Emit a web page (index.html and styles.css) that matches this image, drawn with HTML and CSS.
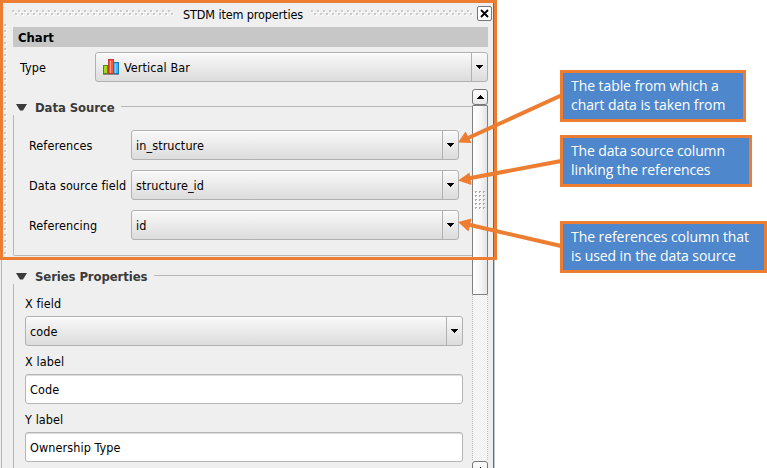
FILE: index.html
```html
<!DOCTYPE html>
<html lang="en">
<head>
<meta charset="utf-8">
<title>STDM item properties</title>
<link rel="stylesheet" href="styles.css">
</head>
<body>
<main class="panel">
  <div class="grip"><svg width="4" height="237"><defs><pattern id="side" width="4" height="6" patternUnits="userSpaceOnUse"><rect width="2" height="2" fill="#c7c7c7"/><path d="M2 1H3V3H1V2H2Z" fill="#fff"/></pattern></defs><rect width="4" height="237" fill="url(#side)"/></svg></div>
  <header class="titlebar">
    <svg class="dots" width="162" height="6"><defs><pattern id="dots" width="6" height="6" patternUnits="userSpaceOnUse"><rect width="2" height="2" fill="#cacaca"/><path d="M2 1H3V3H1V2H2ZM5 4H6V6H4V5H5Z" fill="#fff"/><rect x="3" y="3" width="2" height="2" fill="#cacaca"/></pattern></defs><rect width="162" height="6" fill="url(#dots)"/></svg>
    <h1 class="window-title"><span>STDM item properties</span></h1>
    <svg class="dots" width="162" height="6"><rect width="162" height="6" fill="url(#dots)"/></svg>
    <button class="close" aria-label="Close"><svg width="9" height="9"><path d="M1 1L8 8M8 1L1 8" stroke="#000" stroke-width="1.8"/></svg></button>
  </header>
  <h2 class="section">Chart</h2>
  <div class="type-row">
    <label>Type</label>
    <div class="combo">
      <svg class="chart-icon" width="17" height="17"><path d="M0 15.500H16" stroke="#888" stroke-width="1"/><rect x=".5" y="6.5" width="4" height="8" fill="#a4dc13" stroke="#4e8b08"/><rect x="10.5" y="3.5" width="5" height="11" fill="#48b5f4" stroke="#1479b8"/><rect x="5.5" y=".5" width="5" height="14" fill="#f8583f" stroke="#c8392a"/><path d="M7.500 2V14" stroke="#ff9a80"/><path d="M12.500 5V14" stroke="#8ad2fb"/></svg>
      <span class="value">Vertical Bar</span>
      <span class="drop"><svg width="7" height="4"><path d="M0 0H7V1H6V2H5V3H4V4H3V3H2V2H1V1H0Z"/></svg></span>
    </div>
  </div>
  <div class="body">
    <div class="scroll-content">
      <section class="group source">
        <h3><svg width="11" height="7"><path d="M0 0H11L7 6.5H4Z" fill="#3a3a3a"/></svg><span>Data Source</span></h3>
        <div class="group-box">
          <div class="row"><label>References</label><div class="combo"><span class="value">in_structure</span><span class="drop"><svg width="7" height="4"><path d="M0 0H7V1H6V2H5V3H4V4H3V3H2V2H1V1H0Z"/></svg></span></div></div>
          <div class="row"><label>Data source field</label><div class="combo"><span class="value">structure_id</span><span class="drop"><svg width="7" height="4"><path d="M0 0H7V1H6V2H5V3H4V4H3V3H2V2H1V1H0Z"/></svg></span></div></div>
          <div class="row"><label>Referencing</label><div class="combo"><span class="value">id</span><span class="drop"><svg width="7" height="4"><path d="M0 0H7V1H6V2H5V3H4V4H3V3H2V2H1V1H0Z"/></svg></span></div></div>
        </div>
      </section>
      <section class="group series">
        <h3><svg width="11" height="7"><path d="M0 0H11L7 6.5H4Z" fill="#3a3a3a"/></svg><span>Series Properties</span></h3>
        <div class="group-box">
          <label>X field</label>
          <div class="combo"><span class="value">code</span><span class="drop"><svg width="7" height="4"><path d="M0 0H7V1H6V2H5V3H4V4H3V3H2V2H1V1H0Z"/></svg></span></div>
          <label>X label</label>
          <div class="field">Code</div>
          <label>Y label</label>
          <div class="field">Ownership Type</div>
        </div>
      </section>
    </div>
    <div class="scrollbar">
      <div class="scroll-button"><svg width="7" height="4"><path d="M3 0H4V1H5V2H6V3H7V4H0V3H1V2H2V1H3Z"/></svg></div>
      <div class="thumb"><svg width="11" height="19"><defs><pattern id="thumb-grip" width="4" height="4" patternUnits="userSpaceOnUse"><path d="M0 0H2V1H1V2H0Z" fill="#aaa"/><rect x="1" y="1" width="1" height="1" fill="#fff"/></pattern></defs><rect width="11" height="19" fill="url(#thumb-grip)"/></svg></div>
      <div class="track"><svg width="16" height="166"><defs><pattern id="check" width="2" height="2" patternUnits="userSpaceOnUse"><rect width="2" height="2" fill="#efefef"/><path d="M0 0H1V1H0ZM1 1H2V2H1Z" fill="#fafafa"/></pattern></defs><rect width="16" height="166" fill="url(#check)"/><path d="M.5 0V166M15.5 0V166" stroke="#bbb" stroke-dasharray="1 1"/></svg></div>
      <div class="scroll-button"><svg width="7" height="4"><path d="M3 0H4V1H5V2H6V3H7V4H0V3H1V2H2V1H3Z"/></svg></div>
    </div>
  </div>
</main>
<svg class="annotations" width="767" height="468">
  <path d="M1.5 1.500H495.500V258.500H1.500Z" fill="none" stroke="#ed7d31" stroke-width="3"/>
  <g stroke="#ed7d31" stroke-width="4"><path d="M561 95.500L467 138.500M561 161L468 178.500M561 246L468 224.500"/></g>
  <g fill="#ed7d31"><path d="M458 142.500L465.500 131.500L471.500 143Z"/><path d="M458 180.500L469.500 172.500L471.500 185Z"/><path d="M458 222L471.500 218.500L468.500 231.500Z"/></g>
</svg>
<aside class="callout table-note"><span>The table from which a</span><br><span>chart data is taken from</span></aside>
<aside class="callout column-note"><span>The data source column</span><br><span>linking the references</span></aside>
<aside class="callout reference-note"><span>The references column that</span><br><span>is used in the data source</span></aside>
</body>
</html>
```
FILE: styles.css
```css
* { box-sizing: border-box; }
body { margin: 0; width: 767px; height: 468px; overflow: hidden; position: relative; background: #fff; color: #000; font: 12.5px/16px "DejaVu Sans Condensed", "DejaVu Sans", sans-serif; font-stretch: condensed; letter-spacing: .1px; }
svg { display: block; flex: none; }
h1, h2, h3 { margin: 0; font-size: inherit; }
.panel { width: 495px; height: 468px; padding: 0 5px 0 13px; background: #efefef; border-right: 1px solid #c1c8ce; box-shadow: inset -1px 0 #626b76, inset 1px 0 #efefef, inset 2px 0 #b5b5b5; display: flex; flex-direction: column; }
.grip { position: absolute; left: 4px; top: 24px; }
.titlebar { height: 27px; flex: none; display: flex; align-items: flex-start; margin-left: -1px; padding-top: 6px; }
.dots { margin-top: 4px; }
.window-title { width: 137px; padding: 1px 0 0 1px; text-align: center; font-weight: normal; letter-spacing: -.12px; white-space: nowrap; }
.close { width: 15px; height: 15px; margin-left: auto; margin-right: -3px; padding: 0; display: grid; place-items: center; border: 1px solid #777; border-radius: 2px; background: #fff; }
.section { width: 475px; height: 20px; flex: none; padding: 3px 5px 1px; background: #c7c7c7; font-size: 13px; font-weight: bold; letter-spacing: -.05px; }
.type-row { width: 475px; height: 42px; flex: none; padding: 5px 0 7px; display: flex; align-items: center; }
.type-row label { width: 82px; padding: 2px 0 0 7px; }
.combo { height: 30px; flex: 1; display: flex; align-items: center; border: 1px solid #b1b1b1; border-radius: 3px; background: linear-gradient(#f9f9f9, #dcdcdc); box-shadow: inset 0 1px #fff; }
.value { flex: 1; padding: 2px 0 0 4px; }
.chart-icon { margin-left: 7px; }
.drop { width: 16px; align-self: stretch; display: grid; place-items: center; border-left: 1px solid #b1b1b1; }
.body { width: 475px; flex: 1; min-height: 0; display: flex; overflow: hidden; }
.scroll-content { width: 459px; height: 379px; overflow: hidden; }
.group h3 { height: 26px; display: flex; align-items: center; padding: 10px 0 0 3px; color: #3a3a3a; font-size: 13px; font-weight: bold; letter-spacing: -.1px; white-space: nowrap; }
.group h3 span { margin: 0 7px 0 8px; padding-top: 2px; }
.group h3::after { content: ""; height: 1px; flex: 1; margin-bottom: 2px; background: #b7b7b7; }
.group-box { border-left: 1px solid #b7b7b7; }
.source .group-box { height: 141px; padding: 15px 13px 0 15px; border-bottom: 1px solid #b7b7b7; border-bottom-left-radius: 2px; display: flex; flex-direction: column; gap: 10px; }
.row { display: flex; align-items: center; }
.row label { width: 102px; padding-top: 2px; white-space: nowrap; }
.series { margin-top: 2px; }
.series .group-box { height: 190px; padding: 11px 9px 0 11px; display: flex; flex-direction: column; }
.series label { height: 21px; padding-top: 1px; }
.series .combo, .series .field { flex: none; height: 30px; margin-bottom: 7px; }
.field { border: 1px solid #b5b5b5; border-radius: 3px; background: #fff; box-shadow: inset 0 1px #ddd; padding: 7px 4px; }
.scrollbar { width: 16px; height: 379px; display: flex; flex-direction: column; }
.scroll-button { width: 16px; height: 16px; flex: none; display: grid; place-items: center; border: 1px solid #777; border-radius: 3px; background: linear-gradient(#fff, #e8e8e8); }
.thumb { width: 16px; height: 190px; flex: none; display: grid; place-items: center; border: 1px solid #808080; border-radius: 1px; background: linear-gradient(90deg, #fff, #f7f7f7 50%, #e3e3e3); }
.track { height: 166px; flex: none; }
.annotations { position: absolute; left: 0; top: 0; }
.callout { position: absolute; left: 560px; height: 52px; padding: 3px 8px; background: #4e87cb; border: 3px solid #ed7d31; color: #fff; font: 14px/19px "Open Sans", sans-serif; letter-spacing: -.07px; white-space: nowrap; }
.table-note { top: 70px; width: 186px; }
.column-note { top: 135px; width: 192px; }
.column-note span:first-child { letter-spacing: -.14px; }
.reference-note { top: 221px; width: 207px; }
```
